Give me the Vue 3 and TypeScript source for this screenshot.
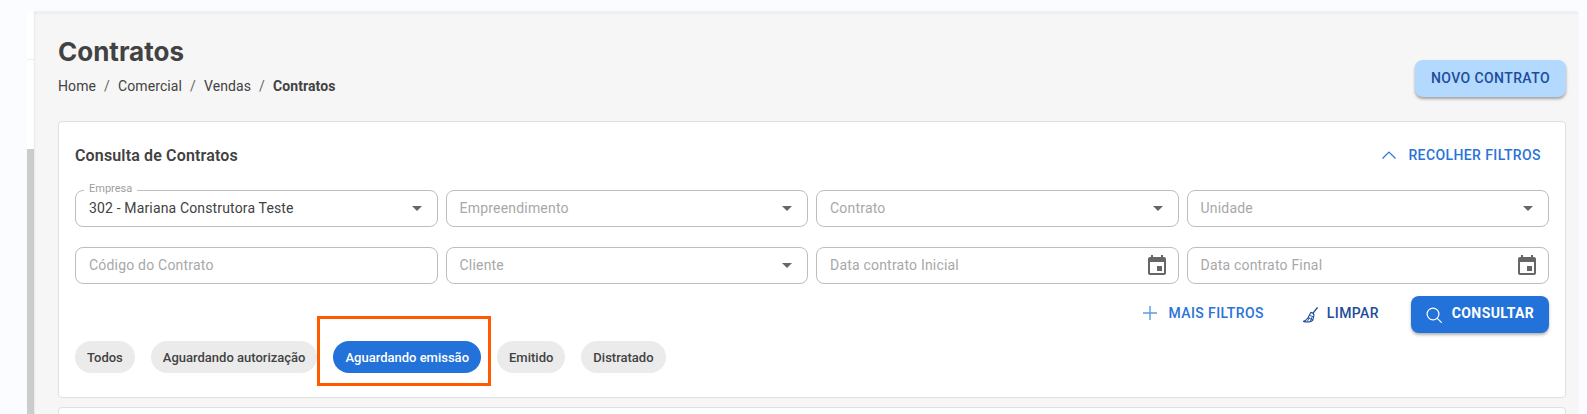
<script setup lang="ts">
interface Field { label: string; kind: 'select' | 'text' | 'date'; value?: string; floating?: string }
const rowOne: Field[] = [
  { label: '', kind: 'select', value: '302 - Mariana Construtora Teste', floating: 'Empresa' },
  { label: 'Empreendimento', kind: 'select' },
  { label: 'Contrato', kind: 'select' },
  { label: 'Unidade', kind: 'select' },
]
const rowTwo: Field[] = [
  { label: 'Código do Contrato', kind: 'text' },
  { label: 'Cliente', kind: 'select' },
  { label: 'Data contrato Inicial', kind: 'date' },
  { label: 'Data contrato Final', kind: 'date' },
]
const rows = [rowOne, rowTwo]
const crumbs = ['Home', 'Comercial', 'Vendas']
const chips = ['Todos', 'Aguardando autorização', 'Aguardando emissão', 'Emitido', 'Distratado']
</script>

<template>
  <div class="page">
    <div class="gutter"></div>
    <div class="rail">
      <div class="rail-top"></div>
      <div class="rail-mid"></div>
      <div class="rail-thumb"></div>
    </div>
    <main class="main">
      <header class="head">
        <div>
          <h1 class="title">Contratos</h1>
          <nav class="crumbs">
            <template v-for="c in crumbs" :key="c">
              <span>{{ c }}</span><span class="sep">/</span>
            </template>
            <strong>Contratos</strong>
          </nav>
        </div>
        <button class="btn-new">NOVO CONTRATO</button>
      </header>

      <section class="card">
        <div class="card-head">
          <h2 class="card-title">Consulta de Contratos</h2>
          <button class="link collapse">
            <svg class="chev" viewBox="0 0 14 8" width="14" height="8"><path d="M.5 7.500 7 1l6.500 6.500" fill="none" stroke="currentColor" stroke-width="1.2" /></svg>
            RECOLHER FILTROS
          </button>
        </div>

        <div v-for="(row, i) in rows" :key="i" class="fields">
          <div v-for="f in row" :key="f.label + f.floating" class="field" :class="{ date: f.kind === 'date' }">
            <span v-if="f.floating" class="floating">{{ f.floating }}</span>
            <span v-if="f.value" class="value">{{ f.value }}</span>
            <span v-else class="placeholder">{{ f.label }}</span>
            <span v-if="f.kind === 'select'" class="caret"></span>
            <svg v-if="f.kind === 'date'" class="cal" viewBox="0 0 24 24" width="24" height="24">
              <path fill="#666" d="M17 12h-5v5h5v-5zM16 1v2H8V1H6v2H5c-1.11 0-1.99.9-1.99 2L3 19c0 1.1.89 2 2 2h14c1.1 0 2-.9 2-2V5c0-1.1-.9-2-2-2h-1V1h-2zm3 18H5V8h14v11z" />
            </svg>
          </div>
        </div>

        <div class="actions">
          <button class="link more">
            <svg viewBox="0 0 14 14" width="14" height="14"><path d="M7 0v14M0 7h14" stroke="#5c9ae6" stroke-width="1.4" fill="none" /></svg>
            MAIS FILTROS
          </button>
          <button class="link clear">
            <svg class="broom" viewBox="0 0 15 16" width="15" height="16" fill="none" stroke="currentColor" stroke-width="1.1" stroke-linejoin="round">
              <path d="M14.600.4 9.800 6.400" stroke-width="1.400" />
              <path d="M7.800 5.400c1.800.4 3 1.400 3.200 2.800L9.800 13.200c-1.200 1.600-5.400 2.400-9.400 1.200 1.900-.5 3.400-1.800 4.400-3.400z" />
              <path d="M5 10.800l5.200 2.200M6.400 8.200l4.400 1.800M4.200 14.600l2.200-4M7.400 14.200l1.800-4.400" stroke-width=".9" />
            </svg>
            LIMPAR
          </button>
          <button class="btn-search">
            <svg viewBox="0 0 16 16" width="16" height="16" fill="none" stroke="#fff" stroke-width="1.2"><circle cx="7" cy="7" r="5.900" /><path d="m11.300 11.300 4.400 4.400" /></svg>
            CONSULTAR
          </button>
        </div>

        <div class="chips">
          <span v-for="c in chips" :key="c" class="chip" :class="{ active: c === 'Aguardando emissão' }">{{ c }}</span>
          <span class="highlight"></span>
        </div>
      </section>

      <section class="card next"></section>
    </main>
    <div class="gutter-right"></div>
  </div>
</template>

<style>
html, body { margin: 0; background: #fafcff; }
</style>

<style scoped>
.page {
  display: flex;
  width: 1587px;
  height: 414px;
  overflow: hidden;
  padding-top: 12px;
  box-sizing: border-box;
  background: #fafcff;
  font-family: Roboto, "Liberation Sans", sans-serif;
  color: #424242;
}
.gutter { width: 27px; flex: none; }
.gutter-right { width: 9px; flex: none; }
.rail {
  width: 7px;
  flex: none;
  display: flex;
  flex-direction: column;
  background: #fff;
}
.rail-top { height: 47px; border-bottom: 1px solid #eeeeee; }
.rail-mid { height: 89px; }
.rail-thumb { flex: 1; background: #cccccc; }
.main {
  flex: 1;
  min-width: 0;
  background: #f6f6f6;
  padding: 0 12px 0 24px;
  box-shadow: inset 0 3px 3px -2px rgba(0, 0, 0, 0.06), inset 2px 0 2px -1px rgba(0, 0, 0, 0.05), 0 -1px 2px rgba(0, 0, 0, 0.05);
}
.head {
  display: flex;
  justify-content: space-between;
  align-items: flex-start;
  height: 109px;
}
.title {
  margin: 25px 0 0;
  font-family: Inter, Roboto, sans-serif;
  font-size: 26px;
  line-height: 29px;
  font-weight: 700;
  color: #424242;
}
.crumbs {
  margin-top: 10px;
  font-size: 14px;
  line-height: 20px;
  letter-spacing: 0.1px;
  display: flex;
}
.crumbs strong { font-weight: 700; }
.sep { margin: 0 8px; color: #666; }
.btn-new {
  margin-top: 48px;
  width: 151px;
  height: 37px;
  border: 0;
  border-radius: 8px;
  background: #b3d9ff;
  color: #1d4d9a;
  font: 500 14px Roboto, sans-serif;
  letter-spacing: 0.4px;
  padding: 0 0 2px;
  box-shadow: 0 2px 3px rgba(0, 0, 0, 0.35);
}
.card {
  background: #fff;
  border: 1px solid #e0e0e0;
  border-radius: 4px;
  box-sizing: border-box;
  height: 277px;
  padding: 0 16px;
  position: relative;
}
.next { height: 40px; margin-top: 9px; }
.card-head {
  display: flex;
  justify-content: space-between;
  align-items: center;
  height: 68px;
  padding-bottom: 2px;
  box-sizing: border-box;
}
.card-title {
  margin: 0;
  font-size: 16px;
  font-weight: 600;
  letter-spacing: 0.15px;
  color: #424242;
}
.link {
  border: 0;
  background: none;
  padding: 0 0 3px;
  display: inline-flex;
  align-items: center;
  font: 500 14px Roboto, sans-serif;
  letter-spacing: 0.4px;
  color: #2a73d9;
}
.collapse { gap: 12px; margin-right: 8px; padding: 0; }
.fields {
  display: grid;
  grid-template-columns: repeat(4, 1fr);
  gap: 8px;
  margin-bottom: 20px;
}
.field {
  position: relative;
  display: flex;
  align-items: center;
  justify-content: space-between;
  height: 37px;
  box-sizing: border-box;
  border: 1px solid #bdbdbd;
  border-radius: 8px;
  padding: 0 5px 2px 13px;
  font-size: 14px;
  letter-spacing: 0.2px;
}
.field.date { padding-right: 9px; }
.floating {
  position: absolute;
  left: 8px;
  top: -8px;
  padding: 0 5px;
  background: #fff;
  font-size: 11px;
  line-height: 12px;
  color: #9e9e9e;
  letter-spacing: 0;
}
.value { color: #424242; letter-spacing: 0.15px; }
.placeholder { color: #a8a8a8; }
.caret {
  width: 0;
  height: 0;
  margin: 2px 10px 0 0;
  border-left: 5px solid transparent;
  border-right: 5px solid transparent;
  border-top: 5px solid #666;
}
.cal { flex: none; margin-top: 2px; }
.actions {
  display: flex;
  justify-content: flex-end;
  align-items: center;
  height: 37px;
  margin-top: -8px;
}
.more { gap: 11px; margin-right: 39px; }
.clear { gap: 9px; margin-right: 32px; color: #1d4d9a; }
.broom { margin-top: 4px; }
.btn-search {
  display: inline-flex;
  align-items: center;
  justify-content: center;
  gap: 10px;
  width: 138px;
  height: 37px;
  padding: 0 0 3px;
  border: 0;
  border-radius: 8px;
  background: #2272d9;
  color: #fff;
  font: 700 14px Roboto, sans-serif;
  letter-spacing: 0.4px;
  box-shadow: 0 2px 3px rgba(0, 0, 0, 0.3);
}
.btn-search svg { margin-top: 3px; }
.chips {
  position: relative;
  display: flex;
  gap: 16px;
  margin-top: 8px;
}
.chip {
  display: inline-flex;
  align-items: center;
  height: 32px;
  padding: 0 12px;
  border-radius: 16px;
  background: #ebebeb;
  font-size: 13px;
  font-weight: 500;
  color: #424242;
}
.chip.active { background: #2272d9; color: #fff; }
.highlight {
  position: absolute;
  left: 242px;
  top: -25px;
  width: 174px;
  height: 70px;
  box-sizing: border-box;
  border: 3px solid #ff5a00;
  pointer-events: none;
}
</style>
